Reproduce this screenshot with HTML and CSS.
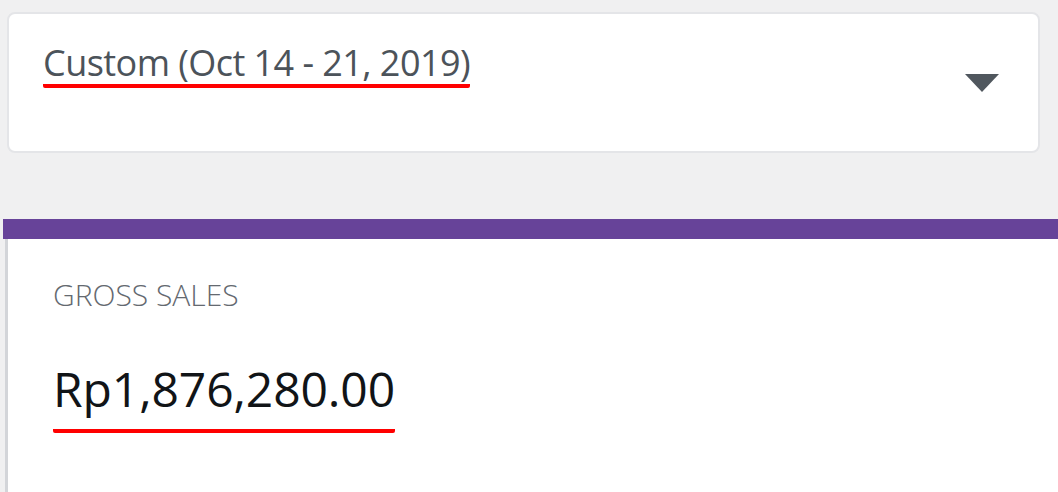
FILE: index.html
```html
<!DOCTYPE html>
<html lang="en">
<head>
<meta charset="utf-8">
<title>Report</title>
<link rel="stylesheet" href="styles.css">
</head>
<body>
<div class="page">
  <div class="range-select">
    <span class="range-label">Custom (Oct 14 - 21, 2019)</span>
    <svg class="caret" width="34" height="18" viewBox="0 0 34 18"><path d="M0 0 H34 L17 18 Z" fill="#50575e"/></svg>
  </div>
  <section class="stat">
    <div class="stat-bar"></div>
    <div class="stat-body">
      <div class="stat-title">GROSS SALES</div>
      <div class="stat-value">Rp1,876,280.00</div>
    </div>
  </section>
</div>
</body>
</html>
```
FILE: styles.css
```css
html, body {
  margin: 0;
  padding: 0;
  background: #f0f0f1;
  height: 100%;
  overflow: hidden;
}
.page {
  font-family: "Open Sans", "Noto Sans", sans-serif;
  padding-top: 12px;
}
.range-select {
  margin: 0 18px 0 7px;
  height: 137px;
  background: #fff;
  border: 2px solid #e4e5e8;
  border-radius: 8px;
  box-sizing: content-box;
  display: flex;
  align-items: flex-start;
  justify-content: space-between;
  padding: 0 39px 0 34px;
}
.range-label {
  margin-top: 28px;
  font-size: 36px;
  line-height: 42px;
  color: #4c535a;
  letter-spacing: -0.55px;
  border-bottom: 4px solid #f00;
  border-radius: 2px;
}
.caret {
  margin-top: 60px;
}
.stat {
  margin: 66px 0 0 3px;
}
.stat-bar {
  height: 20px;
  background: #674399;
}
.stat-body {
  margin-left: 2px;
  border-left: 3px solid #d3d5d9;
  background: #fff;
  height: 260px;
  padding: 36px 0 0 45px;
  box-sizing: border-box;
}
.stat-title {
  font-size: 30px;
  line-height: 40px;
  color: #646970;
  font-weight: 300;
}
.stat-value {
  display: inline-block;
  margin-top: 42px;
  font-size: 48px;
  letter-spacing: -0.1px;
  line-height: 64px;
  padding-bottom: 8px;
  color: #111417;
  border-bottom: 4px solid #f00;
  border-radius: 2px;
}
```
